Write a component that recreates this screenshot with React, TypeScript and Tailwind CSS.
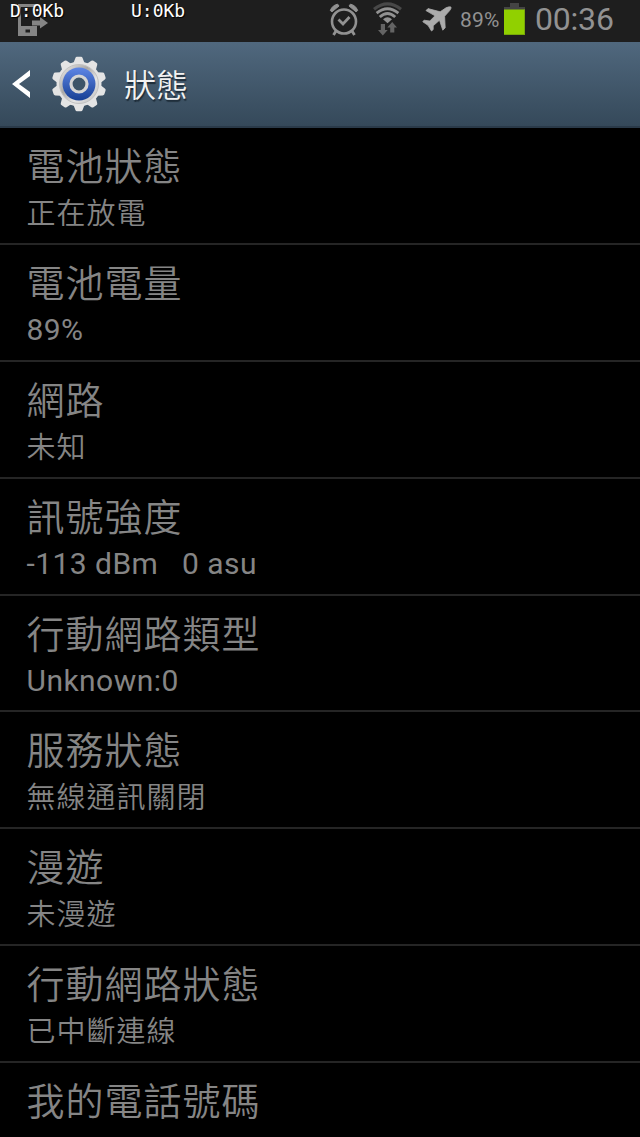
interface IStatusRow {
  title: string;
  summary?: string;
}

const rows: IStatusRow[] = [
  { title: "電池狀態", summary: "正在放電" },
  { title: "電池電量", summary: "89%" },
  { title: "網路", summary: "未知" },
  { title: "訊號強度", summary: "-113 dBm   0 asu" },
  { title: "行動網路類型", summary: "Unknown:0" },
  { title: "服務狀態", summary: "無線通訊關閉" },
  { title: "漫遊", summary: "未漫遊" },
  { title: "行動網路狀態", summary: "已中斷連線" },
  { title: "我的電話號碼" },
];

const teeth = [0, 36, 72, 108, 144, 180, 216, 252, 288, 324];

const UsbIcon = () => (
  <svg className="absolute left-[17px] top-[4px]" width="31" height="33" viewBox="0 0 31 33" fill="#858585">
    <path d="M1 0H20V3H10V22H20V32H1Z" />
    <rect x="4" y="3" width="7" height="19" fill="#1e1e1e" />
    <rect x="8.5" y="25.5" width="4.5" height="3" fill="#1e1e1e" />
    <path d="M15 16.5H23V13L31 19L23 24.5V21.5H15Z" />
  </svg>
);

const AlarmIcon = () => (
  <svg width="30" height="33" viewBox="0 0 30 33" fill="none" stroke="#929292">
    <circle cx="15" cy="18.5" r="12" strokeWidth="2.6" />
    <path d="M9.5 16.5L14 21L20.5 14" strokeWidth="2.8" />
    <path d="M7 28L4.5 32M23 28L25.5 32" strokeWidth="2.8" />
    <path d="M1.3 7.5Q3.5 2 8.7 1.2L10 3L3 8.8ZM28.7 7.5Q26.5 2 21.3 1.2L20 3L27 8.8Z" fill="#929292" strokeWidth="1" strokeLinejoin="round" />
  </svg>
);

const WifiIcon = () => (
  <svg width="29" height="34" viewBox="0 0 29 34" fill="none">
    <path d="M1 7.2Q14.5 -3.4 28 7.2" stroke="#484848" strokeWidth="3.2" />
    <g stroke="#929292" strokeWidth="2.8">
      <path d="M3.6 11.2Q14.5 2.4 25.4 11.2" />
      <path d="M6.8 15Q14.5 8 22.2 15" />
    </g>
    <path d="M10 17.2Q14.5 13.2 19 17.2L14.5 21.2Z" fill="#929292" />
    <path d="M7.8 22H12V28H14.7L9.8 33.5L5 28H7.8Z" fill="#646464" />
    <path d="M17.2 30.5V25.5H14.3L19.2 20L24 25.5H21.3V30.5Z" fill="#646464" />
  </svg>
);

const PlaneIcon = () => (
  <svg width="30" height="27" viewBox="0 0 30 27" fill="#ababab" stroke="#ababab" strokeWidth=".8" strokeLinejoin="round">
    <path d="M29 1Q27 .4 24 1.8L18.2 5.8L6 2.6L4 4.6L13 9.8L7.8 15L2 14.2L.8 15.8L6 19.3L9.5 25L11.2 23.6L11.2 19.8L17.5 14.2L20.8 24.2L23.2 21.8L22.6 10.2L27.5 4.8Q29.5 2.4 29 1Z" />
  </svg>
);

const Battery = () => (
  <svg width="21" height="32" viewBox="0 0 21 32">
    <path d="M6 0H15V4H21V7H0V4H6Z" fill="#444444" />
    <rect y="6.5" width="21" height="25.5" fill="#91d000" />
    <path d="M0 31.5H21M20.5 7V32" stroke="#78a90a" />
  </svg>
);

const GearIcon = () => (
  <svg width="56" height="58" viewBox="-28 -29 56 58">
    <defs>
      <linearGradient id="metal" x1="0" y1="0" x2="1" y2="1">
        <stop offset="0" stopColor="#f4f4f4" />
        <stop offset=".4" stopColor="#aaa8a6" />
        <stop offset=".65" stopColor="#e6e6e6" />
        <stop offset="1" stopColor="#b8b8b8" />
      </linearGradient>
      <linearGradient id="blue" x1="0" y1="0" x2="0" y2="1">
        <stop offset="0" stopColor="#5e86e6" />
        <stop offset="1" stopColor="#173f94" />
      </linearGradient>
    </defs>
    <g fill="#e4e4e4">
      {teeth.map((angle) => (
        <path key={angle} d="M-5.5 -21L-3.6 -26Q-3.2 -27.3 -2 -27.3H2Q3.2 -27.3 3.6 -26L5.5 -21Z" transform={`rotate(${angle})`} />
      ))}
      <circle r="22.5" />
    </g>
    <circle r="19.5" fill="url(#metal)" stroke="#c2c2c2" />
    <circle r="16.5" fill="url(#blue)" />
    <circle r="8" fill="#3d5468" stroke="#d5d5d5" strokeWidth="3.2" />
  </svg>
);

export default function App() {
  const StatusRow = (props: IStatusRow) => {
    return (
      <div className="h-[116.9px] shrink-0 border-b-2 border-[#252525] pl-[26.5px] pt-[12px] whitespace-pre">
        <div className="text-[38px] leading-[54px] tracking-[1px]">{props.title}</div>
        <div
          className={
            /^[ -~]+$/.test(props.summary ?? "")
              ? "pt-px text-[30px] leading-[36px] tracking-[0.45px] font-normal"
              : "text-[29px] leading-[40px] tracking-[1px]"
          }
        >
          {props.summary}
        </div>
      </div>
    );
  };

  return (
    <div className="flex h-[1137px] w-[640px] flex-col overflow-hidden bg-black font-['Roboto','Noto_Sans_CJK_TC',sans-serif] font-[350] text-[#858585]">
      <div className="relative flex h-[42px] shrink-0 items-start bg-[#1e1e1e] pl-[329px] font-normal text-[#929292]">
        <UsbIcon />
        <div className="absolute left-[10px] top-0 flex font-['DejaVu_Sans_Mono',monospace] text-[18px] leading-[22px] text-white [text-shadow:1px_1px_1px_black]">
          <span className="w-[121px]">D:0Kb</span>
          <span>U:0Kb</span>
        </div>
        <div className="pt-[3px]"><AlarmIcon /></div>
        <div className="ml-[14px] pt-[2px]"><WifiIcon /></div>
        <div className="ml-[20px] pt-[6px]"><PlaneIcon /></div>
        <span className="ml-[8px] w-[44px] text-[21px] leading-[41px] tracking-[0.2px]">89%</span>
        <div className="pt-[3px]"><Battery /></div>
        <span className="ml-[10px] text-[32px] leading-[39px] tracking-[-0.2px]">00:36</span>
      </div>
      <div className="flex h-[86px] shrink-0 items-center border-b-2 border-[#2a3a49] bg-linear-to-b from-[#50687e] to-[#35495a] pl-[12px]">
        <svg width="18" height="28" viewBox="0 0 18 28">
          <path d="M18 0V6L7 14L18 22V28L0 14Z" fill="#fff" />
        </svg>
        <div className="ml-[21px]"><GearIcon /></div>
        <h1 className="ml-[17px] pt-[4px] text-[32px] leading-[48px] text-[#f2f2f2] [text-shadow:1px_2px_1px_#1d2b37]">狀態</h1>
      </div>
      {rows.map((row) => (
        <StatusRow key={row.title} {...row} />
      ))}
    </div>
  );
}
